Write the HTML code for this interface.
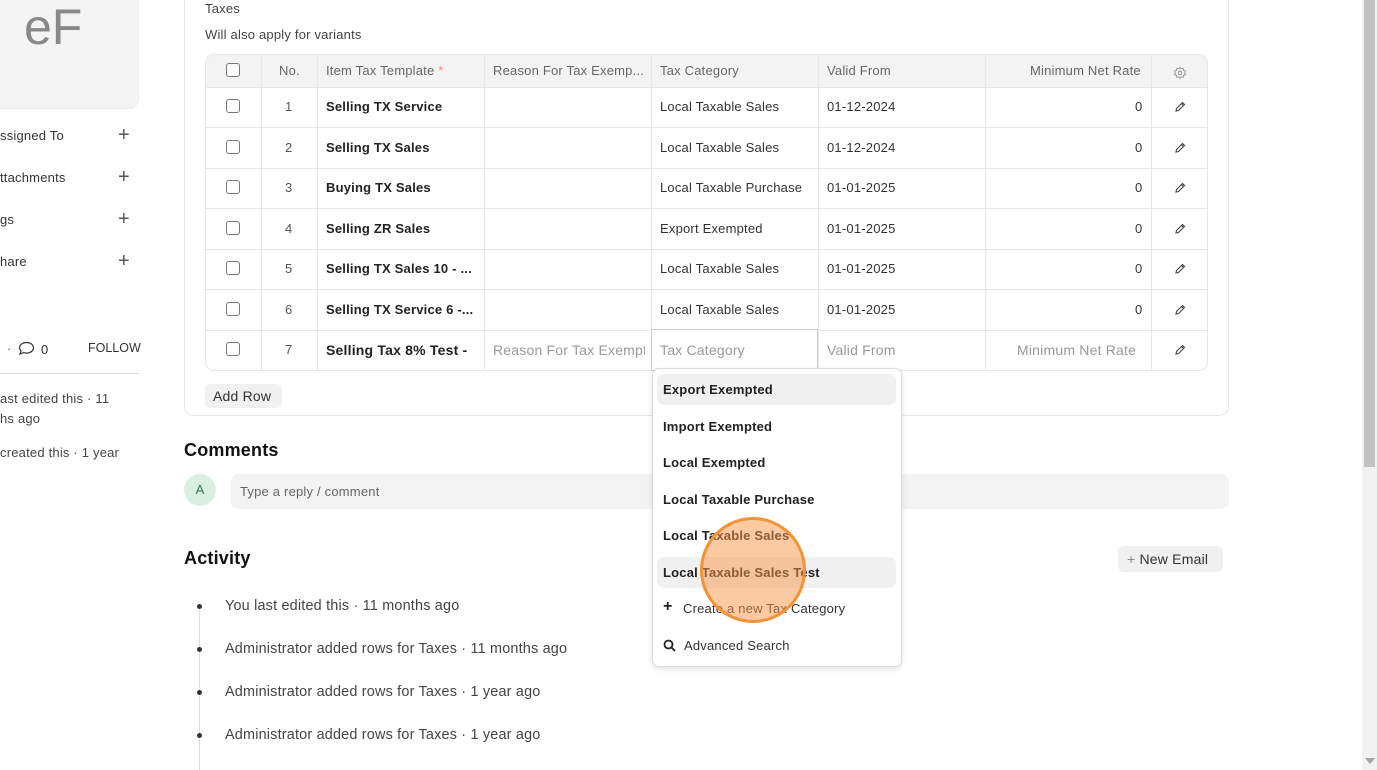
<!DOCTYPE html>
<html><head><meta charset="utf-8"><style>
*{box-sizing:border-box;margin:0;padding:0}
body{width:1377px;height:770px;overflow:hidden;background:#fff;font-family:"Liberation Sans",sans-serif;color:#333;position:relative;font-size:13px;letter-spacing:.2px}
.a{position:absolute;white-space:nowrap}
.cb{width:14px;height:14px;border:1px solid #777;border-radius:3px;background:#fff}
.b{font-weight:bold;color:#222}
.hl{position:absolute;height:1px;background:#e6e6e6}
.vl{position:absolute;width:1px;background:#e6e6e6}
.ph{color:#999;font-size:14px}
.dd{font-weight:bold;color:#222;font-size:13px}
.act{font-size:14.4px;color:#444}
</style></head><body>
<div class="a" style="left:-10px;top:-10px;width:149px;height:119px;background:#f3f3f3;border-radius:10px;border:1px solid #eee"></div>
<div class="a" style="left:24px;top:-2px;font-size:50px;color:#888;letter-spacing:0">eF</div>
<div class="a" style="left:0;top:128px;color:#333">ssigned To</div>
<div class="a" style="left:0;top:170px;color:#333">ttachments</div>
<div class="a" style="left:0;top:212px;color:#333">gs</div>
<div class="a" style="left:0;top:254px;color:#333">hare</div>
<div class="a" style="left:118px;top:124px;font-size:20px;color:#555">+</div>
<div class="a" style="left:118px;top:166px;font-size:20px;color:#555">+</div>
<div class="a" style="left:118px;top:208px;font-size:20px;color:#555">+</div>
<div class="a" style="left:118px;top:250px;font-size:20px;color:#555">+</div>
<div class="a" style="left:7px;top:341px;color:#555">·</div>
<svg class="a" style="left:18px;top:341px" width="17" height="15" viewBox="0 0 17 15"><path d="M8.5 1.5c4 0 7 2.4 7 5.3s-3 5.3-7 5.3c-1 0-2-.2-2.8-.5L2 13l1-3C2 9 1.5 8 1.5 6.8 1.5 3.9 4.5 1.5 8.5 1.5z" fill="none" stroke="#333" stroke-width="1.2"/></svg>
<div class="a" style="left:41px;top:342px;color:#333">0</div>
<div class="a" style="left:88px;top:341px;color:#333;font-size:12.5px;letter-spacing:0">FOLLOW</div>
<div class="hl" style="left:0;top:373px;width:139px;background:#ddd"></div>
<div class="a" style="left:0;top:391px;color:#444">ast edited this · 11</div>
<div class="a" style="left:0;top:411px;color:#444">hs ago</div>
<div class="a" style="left:0;top:445px;color:#444">created this · 1 year</div>
<div class="a" style="left:184px;top:-20px;width:1045px;height:436px;border:1px solid #e8e8e8;border-radius:10px"></div>
<div class="a" style="left:205px;top:1px;color:#444">Taxes</div>
<div class="a" style="left:205px;top:27px;color:#444">Will also apply for variants</div>
<div class="a" style="left:205px;top:54px;width:1003px;height:317px;border:1px solid #e6e6e6;border-radius:9px;overflow:hidden">
<div style="height:33px;background:#f3f3f3;border-bottom:1px solid #e6e6e6"></div>
</div>
<div class="hl" style="left:205px;top:127px;width:1003px"></div>
<div class="hl" style="left:205px;top:168px;width:1003px"></div>
<div class="hl" style="left:205px;top:208px;width:1003px"></div>
<div class="hl" style="left:205px;top:249px;width:1003px"></div>
<div class="hl" style="left:205px;top:289px;width:1003px"></div>
<div class="hl" style="left:205px;top:330px;width:1003px"></div>
<div class="vl" style="left:261px;top:55px;height:315px"></div>
<div class="vl" style="left:317px;top:55px;height:315px"></div>
<div class="vl" style="left:484px;top:55px;height:315px"></div>
<div class="vl" style="left:651px;top:55px;height:315px"></div>
<div class="vl" style="left:818px;top:55px;height:315px"></div>
<div class="vl" style="left:985px;top:55px;height:315px"></div>
<div class="vl" style="left:1151px;top:55px;height:315px"></div>
<div class="a" style="left:226px;top:63px"><div class="cb"></div></div>
<div class="a" style="left:279px;top:63px;color:#666">No.</div>
<div class="a" style="left:326px;top:63px;color:#666">Item Tax Template <span style="color:#e88">*</span></div>
<div class="a" style="left:493px;top:63px;color:#666">Reason For Tax Exemp...</div>
<div class="a" style="left:660px;top:63px;color:#666">Tax Category</div>
<div class="a" style="left:827px;top:63px;color:#666">Valid From</div>
<div class="a" style="left:1030px;top:63px;color:#666">Minimum Net Rate</div>
<svg class="a" style="left:1173px;top:66px" width="14" height="14" viewBox="0 0 24 24"><circle cx="12" cy="12" r="3" fill="none" stroke="#888" stroke-width="1.6"/><path d="M12 2l2 3 3.5-1 .5 3.5 3.5 1-1.5 3.5 1.5 3-3.5 1-.5 3.5-3.5-1-2 3-2-3-3.5 1-.5-3.5-3.5-1 1.5-3-1.5-3.5 3.5-1 .5-3.5 3.5 1z" fill="none" stroke="#888" stroke-width="1.4"/></svg>
<div id="rows"></div>
<script>
var r=[["1","Selling TX Service","Local Taxable Sales","01-12-2024"],["2","Selling TX Sales","Local Taxable Sales","01-12-2024"],["3","Buying TX Sales","Local Taxable Purchase","01-01-2025"],["4","Selling ZR Sales","Export Exempted","01-01-2025"],["5","Selling TX Sales 10 - ...","Local Taxable Sales","01-01-2025"],["6","Selling TX Service 6 -...","Local Taxable Sales","01-01-2025"]];
var h="";var tops=[106,147,187,228,268,309];
var pen='<svg width="12" height="12" viewBox="0 0 12 12"><path d="M2 10l.5-2.5L8.5 1.5l2 2-6 6zM7.5 2.5l2 2" fill="none" stroke="#444" stroke-width="1.1"/></svg>';
r.forEach(function(x,i){var t=tops[i];
h+='<div class="a" style="left:226px;top:'+(t-7)+'px"><div class="cb"></div></div>';
h+='<div class="a" style="left:285px;top:'+(t-7)+'px;color:#555">'+x[0]+'</div>';
h+='<div class="a b" style="left:326px;top:'+(t-7)+'px">'+x[1]+'</div>';
h+='<div class="a" style="left:660px;top:'+(t-7)+'px;color:#333">'+x[2]+'</div>';
h+='<div class="a" style="left:827px;top:'+(t-7)+'px;color:#333">'+x[3]+'</div>';
h+='<div class="a" style="left:1135px;top:'+(t-7)+'px;color:#333">0</div>';
h+='<div class="a" style="left:1174px;top:'+(t-5)+'px">'+pen+'</div>';});
h+='<div class="a" style="left:226px;top:342px"><div class="cb"></div></div>';
h+='<div class="a" style="left:285px;top:342px;color:#555">7</div>';
h+='<div class="a" style="left:1174px;top:344px">'+pen+'</div>';
document.getElementById("rows").innerHTML=h;
</script>
<div class="a b" style="left:326px;top:342px;font-size:14px">Selling Tax 8% Test -</div>
<div class="a ph" style="left:493px;top:342px;width:152px;overflow:hidden">Reason For Tax Exemption</div>
<div class="a" style="left:651px;top:329px;width:167px;height:42px;border:1px solid #ccc;background:#fff"></div>
<div class="a ph" style="left:660px;top:342px">Tax Category</div>
<div class="a ph" style="left:827px;top:342px">Valid From</div>
<div class="a ph" style="left:1017px;top:342px">Minimum Net Rate</div>
<div class="a" style="left:205px;top:384px;width:77px;height:24px;background:#f0f0f0;border-radius:6px;font-size:14px;color:#333;padding:4px 0 0 8px">Add Row</div>
<div class="a" style="left:184px;top:440px;font-size:18px;font-weight:bold;color:#111">Comments</div>
<div class="a" style="left:184px;top:474px;width:32px;height:32px;border-radius:50%;background:#d8efe2;color:#2c7a4b;text-align:center;line-height:32px;font-size:13px">A</div>
<div class="a" style="left:231px;top:474px;width:998px;height:35px;background:#f3f3f3;border-radius:8px;color:#666;padding:10px 0 0 9px">Type a reply / comment</div>
<div class="a" style="left:184px;top:548px;font-size:18px;font-weight:bold;color:#111">Activity</div>
<div class="a" style="left:1118px;top:546px;width:105px;height:26px;background:#f0f0f0;border-radius:6px;color:#333;font-size:14px;padding:5px 0 0 9px"><span style="color:#888">+</span> New Email</div>
<div class="vl" style="left:199px;top:610px;height:160px;background:#ddd"></div>
<div class="a" style="left:197px;top:604px;width:5px;height:5px;border-radius:50%;background:#333"></div>
<div class="a" style="left:197px;top:647px;width:5px;height:5px;border-radius:50%;background:#333"></div>
<div class="a" style="left:197px;top:690px;width:5px;height:5px;border-radius:50%;background:#333"></div>
<div class="a" style="left:197px;top:733px;width:5px;height:5px;border-radius:50%;background:#333"></div>
<div class="a act" style="left:225px;top:598px">You last edited this · 11 months ago</div>
<div class="a act" style="left:225px;top:641px">Administrator added rows for Taxes · 11 months ago</div>
<div class="a act" style="left:225px;top:684px">Administrator added rows for Taxes · 1 year ago</div>
<div class="a act" style="left:225px;top:727px">Administrator added rows for Taxes · 1 year ago</div>
<div class="a" style="left:652px;top:368px;width:250px;height:299px;background:#fff;border:1px solid #ddd;border-radius:7px;box-shadow:0 2px 6px rgba(0,0,0,.12)"></div>
<div class="a" style="left:657px;top:374px;width:239px;height:31px;background:#f0f0f0;border-radius:7px"></div>
<div class="a" style="left:657px;top:557px;width:239px;height:31px;background:#f0f0f0;border-radius:7px"></div>
<div class="a dd" style="left:663px;top:382px">Export Exempted</div>
<div class="a dd" style="left:663px;top:419px">Import Exempted</div>
<div class="a dd" style="left:663px;top:455px">Local Exempted</div>
<div class="a dd" style="left:663px;top:492px">Local Taxable Purchase</div>
<div class="a dd" style="left:663px;top:528px">Local Taxable Sales</div>
<div class="a dd" style="left:663px;top:565px">Local Taxable Sales Test</div>
<div class="a" style="left:663px;top:598px;font-size:16px;font-weight:bold;color:#222">+</div>
<div class="a" style="left:683px;top:601px;color:#333">Create a new Tax Category</div>
<svg class="a" style="left:663px;top:639px" width="13" height="13" viewBox="0 0 13 13"><circle cx="5.5" cy="5.5" r="4" fill="none" stroke="#222" stroke-width="1.8"/><path d="M8.5 8.5l3.5 3.5" stroke="#222" stroke-width="1.8"/></svg>
<div class="a" style="left:684px;top:638px;color:#333">Advanced Search</div>
<div class="a" style="left:700px;top:517px;width:106px;height:106px;border-radius:50%;background:rgba(248,150,70,.5);border:3px solid #f39236"></div>
<div class="a" style="left:1362px;top:0;width:15px;height:770px;background:#f1f1f1"></div>
<div class="a" style="left:1364px;top:0;width:11px;height:467px;background:#c1c1c1"></div>
<div class="a" style="left:1365px;top:758px;width:0;height:0;border-left:5px solid transparent;border-right:5px solid transparent;border-top:6px solid #a3a3a3"></div>
</body></html>
